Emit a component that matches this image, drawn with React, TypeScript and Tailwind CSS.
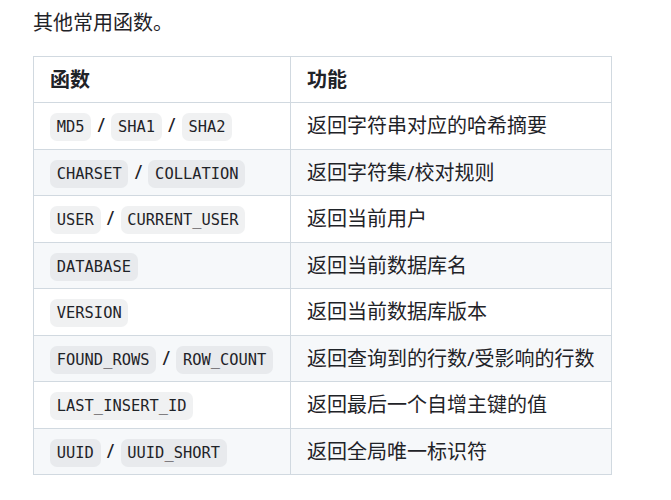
const rows: { fns: string[]; desc: string }[] = [
  { fns: ["MD5", "SHA1", "SHA2"], desc: "返回字符串对应的哈希摘要" },
  { fns: ["CHARSET", "COLLATION"], desc: "返回字符集/校对规则" },
  { fns: ["USER", "CURRENT_USER"], desc: "返回当前用户" },
  { fns: ["DATABASE"], desc: "返回当前数据库名" },
  { fns: ["VERSION"], desc: "返回当前数据库版本" },
  { fns: ["FOUND_ROWS", "ROW_COUNT"], desc: "返回查询到的行数/受影响的行数" },
  { fns: ["LAST_INSERT_ID"], desc: "返回最后一个自增主键的值" },
  { fns: ["UUID", "UUID_SHORT"], desc: "返回全局唯一标识符" },
];

function Code({ children }: { children: string }) {
  return (
    <code className="rounded-[7px] bg-[#818b981f] px-[6.8px] py-[5px] font-['DejaVu_Sans_Mono',monospace] text-[15.4px]">
      {children}
    </code>
  );
}

// rows are 46.5px apart in the shot, so cells get a fixed height
const cell = "h-[46.5px] whitespace-nowrap border border-[#d1d9e0] px-[16px] pt-[1px] pb-0 align-middle leading-[20px]";

export default function App() {
  return (
    <div className="min-h-[500px] bg-white px-[33px] pt-[7px] font-['Noto_Sans','Noto_Sans_CJK_SC',sans-serif] text-[20px] leading-[30px] text-[#1f2328]">
      <p className="mb-[19px] font-['Noto_Sans_CJK_SC',sans-serif]">其他常用函数。</p>

      <table className="w-[579px] table-fixed border-collapse">
        <colgroup>
          <col className="w-[257px]" />
          <col />
        </colgroup>
        <thead>
          <tr className="bg-white">
            <th className={`${cell} h-[46px] text-left font-semibold`}>函数</th>
            <th className={`${cell} h-[46px] text-left font-semibold`}>功能</th>
          </tr>
        </thead>
        <tbody>
          {rows.map((r, i) => (
            <tr key={r.desc} className={i % 2 === 1 ? "bg-[#f6f8fa]" : "bg-white"}>
              <td className={cell}>
                {r.fns.map((f, j) => (
                  <span key={f}>
                    {j > 0 && <span className="px-[1px]"> / </span>}
                    <Code>{f}</Code>
                  </span>
                ))}
              </td>
              <td className={cell}>{r.desc}</td>
            </tr>
          ))}
        </tbody>
      </table>
    </div>
  );
}
